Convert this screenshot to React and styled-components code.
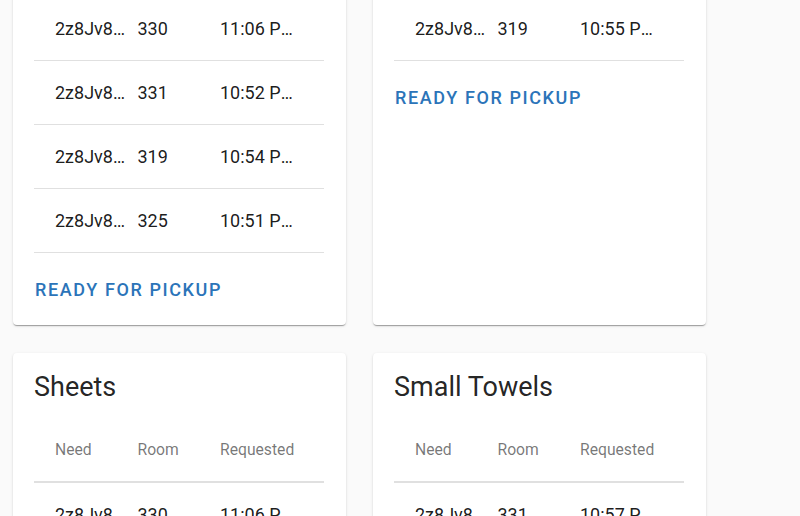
import React from "react";
import styled, { createGlobalStyle } from "styled-components";

const Global = createGlobalStyle`
  html, body { margin: 0; padding: 0; background: #fafafa; }
  body { font-family: Roboto, "Liberation Sans", Arial, sans-serif; overflow: hidden; }
`;

const Viewport = styled.div`
  height: 516px;
  overflow: hidden;
`;

const Page = styled.div`
  margin-top: ${(p) => p.$scroll}px;
  padding: 13px 0 13px 13px;
  display: grid;
  grid-template-columns: 333px 333px;
  column-gap: 27px;
  row-gap: 28px;
  align-items: stretch;
`;

const Card = styled.div`
  background: #fff;
  border-radius: 4px;
  box-shadow: 0 2px 1px -1px rgba(0,0,0,0.2), 0 1px 1px 0 rgba(0,0,0,0.14), 0 1px 3px 0 rgba(0,0,0,0.12);
  display: flex;
  flex-direction: column;
`;

const Content = styled.div`
  padding: 20px 22px 0 21px;
`;

const Title = styled.h2`
  margin: 0 0 18px 0;
  font-size: 27px;
  line-height: 28px;
  font-weight: 400;
  color: rgba(0,0,0,0.87);
`;

const Table = styled.div`
  padding: 0 22px 0 21px;
`;

const Row = styled.div`
  display: grid;
  grid-template-columns: 75px 75px 75px;
  column-gap: 7.5px;
  padding: 0 29px 0 21px;
  align-items: center;
  height: ${(p) => (p.$head ? 62 : 63)}px;
  border-bottom: ${(p) => (p.$head ? "2px" : "1px")} solid #e0e0e0;
`;

const Cell = styled.div`
  font-size: 18px;
  color: rgba(0,0,0,0.9);
  white-space: nowrap;
  overflow: hidden;
  text-overflow: ellipsis;
  line-height: 24px;
`;

const HeadCell = styled.div`
  font-size: 15.7px;
  color: rgba(0,0,0,0.54);
  white-space: nowrap;
  line-height: 24px;
`;

const Actions = styled.div`
  height: 72px;
  display: flex;
  align-items: center;
  padding-left: 22px;
`;

const Button = styled.button`
  border: 0;
  background: transparent;
  padding: 0;
  font-family: Roboto, "Liberation Sans", Arial, sans-serif;
  font-weight: 500;
  font-size: 18px;
  letter-spacing: 1.6px;
  text-transform: uppercase;
  color: #2b74b9;
  cursor: pointer;
`;

const ID = "2z8Jv8kQ4xTn";

const cards = [
  {
    title: "Bath Towels",
    rows: [
      ["330", "11:06 PM"],
      ["331", "10:52 PM"],
      ["319", "10:54 PM"],
      ["325", "10:51 PM"],
    ],
  },
  { title: "Pillows", rows: [["319", "10:55 PM"]] },
  { title: "Sheets", rows: [["330", "11:06 PM"], ["325", "10:58 PM"]] },
  { title: "Small Towels", rows: [["331", "10:57 PM"], ["319", "10:59 PM"]] },
];

function InventoryCard({ title, rows }) {
  return (
    <Card>
      <Content>
        <Title>{title}</Title>
      </Content>
      <Table>
        <Row $head>
          <HeadCell>Need</HeadCell>
          <HeadCell>Room</HeadCell>
          <HeadCell>Requested</HeadCell>
        </Row>
        {rows.map(([room, time], i) => (
          <Row key={i}>
            <Cell>{ID}</Cell>
            <Cell>{room}</Cell>
            <Cell>{time}</Cell>
          </Row>
        ))}
      </Table>
      <Actions>
        <Button>Ready for pickup</Button>
      </Actions>
    </Card>
  );
}

export default function App() {
  return (
    <Viewport>
      <Global />
      <Page $scroll={-146}>
        {cards.map((c) => (
          <InventoryCard key={c.title} {...c} />
        ))}
      </Page>
    </Viewport>
  );
}
